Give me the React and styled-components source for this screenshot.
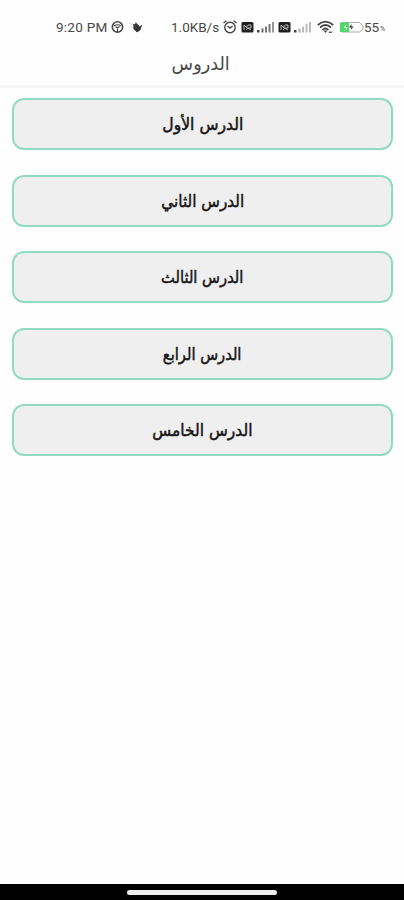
import React from 'react';
import styled, { createGlobalStyle } from 'styled-components';

const GlobalStyle = createGlobalStyle`
  * { box-sizing: border-box; }
  body { margin: 0; background: #fefefe; }
`;

const Screen = styled.div`
  display: flex;
  flex-direction: column;
  width: 100%;
  height: 100vh;
  overflow: hidden;
  background: #fefefe;
`;

const StatusBar = styled.header`
  display: flex;
  align-items: center;
  flex: none;
  height: 44px;
  padding: 10px 0 0 56px;
  direction: ltr;
`;

const StatusText = styled.span`
  flex: none;
  width: ${(p) => p.$width}px;
  margin-right: ${(p) => p.$gap || 0}px;
  color: #484848;
  font: 400 ${(p) => p.$size || 13.5}px/16px Roboto, sans-serif;
  letter-spacing: ${(p) => p.$spacing || 0}px;
  white-space: nowrap;
`;

const PercentSign = styled(StatusText)`
  padding-top: 4px;
`;

const Glyph = styled.svg`
  display: block;
  flex: none;
  width: ${(p) => p.$width}px;
  height: 14px;
  margin-right: ${(p) => p.$gap || 0}px;
  overflow: visible;
`;

const TitleBar = styled.div`
  display: flex;
  justify-content: center;
  flex: none;
  height: 44px;
  padding: 5px 3px 0 0;
  border-bottom: 3px solid #f6f6f6;
`;

const Title = styled.h1`
  margin: 0;
  color: #484848;
  font: 400 18px/30px "DejaVu Sans", sans-serif;
  transform: scaleX(${(p) => p.$stretch});
`;

const LessonList = styled.main`
  display: flex;
  flex: 1;
  flex-direction: column;
  gap: 24.5px;
  padding: 10px 11px 0 12px;
`;

const LessonButton = styled.button`
  display: flex;
  align-items: center;
  justify-content: center;
  flex: none;
  height: 52px;
  padding: 2px 0 0;
  border: 2px solid #91dcc1;
  border-radius: 12px;
  background: #efefef;
  color: #151515;
  font: 400 16.5px/24px "DejaVu Sans", sans-serif;
  -webkit-text-stroke: 0.5px #151515;
`;

const LessonLabel = styled.span`
  white-space: nowrap;
  transform: scaleX(${(p) => p.$stretch});
`;

const NavigationBar = styled.footer`
  display: flex;
  justify-content: center;
  flex: none;
  height: 16px;
  padding-top: 6px;
  background: #000;
`;

const HomeHandle = styled.div`
  width: 150px;
  height: 5px;
  border-radius: 3px;
  background: #eee;
`;

const lessons = [
  { name: 'الدرس الأول', stretch: 0.945 },
  { name: 'الدرس الثاني', stretch: 0.925 },
  { name: 'الدرس الثالث', stretch: 0.89 },
  { name: 'الدرس الرابع', stretch: 0.89 },
  { name: 'الدرس الخامس', stretch: 0.937 },
];

function SteeringIcon() {
  return (
    <Glyph $width={13} $gap={5} viewBox="0 0 13 14" fill="none" stroke="#484848" strokeWidth="1.6">
      <circle cx="6.5" cy="7" r="5.2" />
      <path d="M3 6Q6.5 3.5 10 6M4.5 6.5L6.5 8L8.5 6.5M6.5 8V12" strokeWidth="1.1" />
    </Glyph>
  );
}

function HandIcon() {
  return (
    <Glyph $width={14} $gap={28} viewBox="0 0 14 14" fill="none" strokeLinecap="round">
      <path d="M0.5 3L2.5 4.5M1 7H2" stroke="#ccc" />
      <path d="M5 5Q7 2 9 5L10.5 7L12.5 5.5L11 10L8 12L5 9Z" fill="#333" stroke="#444" />
      <path d="M4 4L7 7M7 3L9 6" stroke="#555" />
    </Glyph>
  );
}

function AlarmIcon() {
  return (
    <Glyph $width={14} $gap={4} viewBox="0 0 14 14" fill="none" stroke="#444" strokeWidth="1.4">
      <circle cx="7" cy="7.5" r="5.2" />
      <path d="M0.5 3L3.5 0.8M10.5 0.8L13.5 3M4.5 6L7 8L9.5 6" />
    </Glyph>
  );
}

function SimIcon({ gap }) {
  return (
    <Glyph $width={13} $gap={gap} viewBox="0 0 13 14">
      <rect x="0.5" y="2" width="12" height="10.5" rx="1.5" fill="#202020" />
      <path d="M3 10V5L6 8V5M7 5H10V8H7M5 10L7 8L10 10" fill="none" stroke="#ccc" strokeWidth="0.9" />
    </Glyph>
  );
}

function SignalIcon({ gap, strong }) {
  return (
    <Glyph $width={18} $gap={gap} viewBox="0 0 18 14">
      <rect x="0" y="10" width="2.5" height="2.5" fill="#444" />
      <rect x="4.5" y="8.5" width="2" height="4" fill={strong ? '#666' : '#aaa'} />
      <rect x="8" y="6.5" width="2" height="6" fill={strong ? '#777' : '#bbb'} />
      <rect x="11.5" y="4" width="2" height="8.5" fill={strong ? '#777' : '#bbb'} />
      <rect x="15" y="2" width="2" height="10.5" fill={strong ? '#999' : '#bbb'} />
    </Glyph>
  );
}

function WifiIcon() {
  return (
    <Glyph $width={18} $gap={5} viewBox="0 0 18 14" fill="none" stroke="#444" strokeWidth="1.7">
      <path d="M0.8 5Q8.5 -1.8 16.2 5M3 7.5Q8.5 2.5 14 7.5M5.5 10Q8.5 7 11.5 10" />
      <path d="M6.5 10.5L8.5 13L10.5 10.5Z" fill="#444" stroke="none" />
      <path d="M12 13L13 11.5L14 13L15 11.5" strokeWidth="1" />
    </Glyph>
  );
}

function BatteryIcon() {
  return (
    <Glyph $width={24} viewBox="0 0 24 14">
      <path d="M2 2.5H19.5L23 6V9L19.5 12H2Z" fill="#fff" stroke="#aaa" />
      <rect x="0" y="2.5" width="9" height="9.5" fill="#51d66a" />
      <path d="M6 4L3.5 8H6L5 11L8 7H6Z" fill="#c9f6cf" />
      <path d="M11.5 4L9 7.5H11.5L10.5 10.5L13.5 6.5H11.5Z" fill="#303030" />
    </Glyph>
  );
}

export default function App() {
  return (
    <>
      <GlobalStyle />
      <Screen dir="rtl" lang="ar">
        <StatusBar>
          <StatusText $width={52} $gap={3} $spacing={0.25}>9:20 PM</StatusText>
          <SteeringIcon />
          <HandIcon />
          <StatusText $width={49} $gap={3}>1.0KB/s</StatusText>
          <AlarmIcon />
          <SimIcon gap={3} />
          <SignalIcon gap={3} strong />
          <SimIcon gap={3} />
          <SignalIcon gap={5} />
          <WifiIcon />
          <BatteryIcon />
          <StatusText $width={16} $size={13.5}>55</StatusText>
          <PercentSign $width={7} $size={7}>%</PercentSign>
        </StatusBar>
        <TitleBar>
          <Title $stretch={0.98}>الدروس</Title>
        </TitleBar>
        <LessonList>
          {lessons.map(({ name, stretch }) => (
            <LessonButton key={name} type="button">
              <LessonLabel $stretch={stretch}>{name}</LessonLabel>
            </LessonButton>
          ))}
        </LessonList>
        <NavigationBar>
          <HomeHandle />
        </NavigationBar>
      </Screen>
    </>
  );
}
